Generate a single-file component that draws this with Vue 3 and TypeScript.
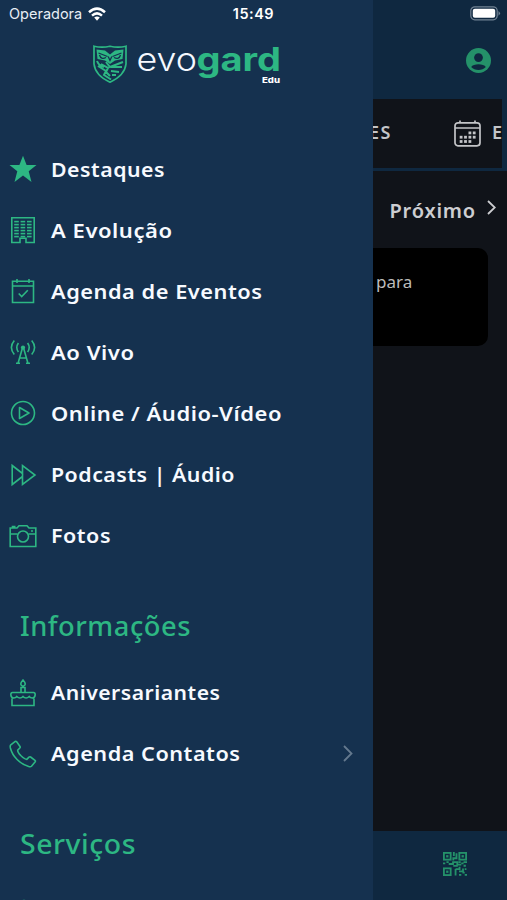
<script setup lang="ts">
type IconName = 'star' | 'building' | 'event' | 'antenna' | 'play' | 'forward' | 'camera' | 'cake' | 'phone' | 'circle'

interface MenuItem {
  label: string
  icon: IconName
  width: number
  expandable?: boolean
}

interface MenuSection {
  title?: string
  titleWidth?: number
  items: MenuItem[]
}

const sections: MenuSection[] = [
  {
    items: [
      { label: 'Destaques', icon: 'star', width: 114 },
      { label: 'A Evolução', icon: 'building', width: 121.5 },
      { label: 'Agenda de Eventos', icon: 'event', width: 211.5 },
      { label: 'Ao Vivo', icon: 'antenna', width: 83.5 },
      { label: 'Online / Áudio-Vídeo', icon: 'play', width: 231 },
      { label: 'Podcasts | Áudio', icon: 'forward', width: 184 },
      { label: 'Fotos', icon: 'camera', width: 60 },
    ],
  },
  {
    title: 'Informações',
    titleWidth: 171,
    items: [
      { label: 'Aniversariantes', icon: 'cake', width: 169.5 },
      { label: 'Agenda Contatos', icon: 'phone', width: 189.5, expandable: true },
    ],
  },
  {
    title: 'Serviços',
    titleWidth: 116,
    items: [{ label: '', icon: 'circle', width: 0 }],
  },
]

const windows = [0, 1, 2, 3, 4, 5].flatMap((row) => [0, 1, 2].map((col) => ({ x: 5.2 + col * 6.4, y: 4.8 + row * 3 })))

const calendarDots = [
  [15, 11.5], [19.3, 11.5],
  [6.2, 15.8], [10.6, 15.8], [15, 15.8], [19.3, 15.8],
  [6.2, 20.1], [10.6, 20.1], [15, 20.1],
]

const qrFinders = [[0, 0], [13.5, 0], [0, 13.5]]
</script>

<template>
  <div class="screen">
    <div class="page">
      <header class="page-header">
        <svg class="account" viewBox="0 0 24 24">
          <circle cx="12" cy="12" r="12" fill="currentColor" />
          <circle cx="12" cy="9.2" r="4.2" fill="#0f2840" />
          <path d="M5 18.3C6.7 14.8 17.3 14.8 19 18.3C15.8 22 8.2 22 5 18.3Z" fill="#0f2840" />
        </svg>
      </header>
      <nav class="tabs">
        <span class="tab tab-prev">ES</span>
        <svg class="calendar" viewBox="0 0 27 27" fill="none" stroke="currentColor" stroke-width="1.7">
          <rect x="1" y="2.8" width="25" height="23" rx="3" />
          <path d="M1 8H26M6 .5V3M21 .5V3" />
          <rect v-for="[x, y] in calendarDots" :key="`${x}-${y}`" :x="x - .5" :y="y" width="2.8" height="2.8" fill="currentColor" stroke="none" />
        </svg>
        <span class="tab tab-next">E</span>
      </nav>
      <main class="content">
        <div class="next">
          <span class="next-label">Próximo</span>
          <svg class="next-arrow" viewBox="0 0 9 15" fill="none" stroke="currentColor" stroke-width="1.8"><path d="M1 1L7.8 7.5L1 14" /></svg>
        </div>
        <article class="card">para</article>
      </main>
      <footer class="bottom">
        <svg class="qr" viewBox="0 0 21 21" fill="none" stroke="currentColor">
          <g v-for="[x, y] in qrFinders" :key="`${x}-${y}`">
            <rect :x="x + .8" :y="y + .8" width="5.9" height="5.9" stroke-width="1.6" />
            <rect :x="x + 2.75" :y="y + 2.75" width="2" height="2" fill="currentColor" stroke="none" />
          </g>
          <path d="M9.5 0V3.5M11.8 1.2V5.5H9V7.5M0 10H2M3 8.8H5M5 10.5H9.5M8 8.8H12.5V11H16M13.5 8.8H15.5M16 10H18M18 8.8H21M9 12.2H13M18 12H20M11 14.8V20.5M11 15H14.5V13M14 17H17.5V14.5M19 15H20.5M17 18H19M14 20H16M19 20H21M8.8 8V11" stroke-width="1.6" />
        </svg>
      </footer>
    </div>

    <aside class="drawer">
      <div class="brand">
        <svg class="shield" viewBox="0 0 34 38" fill="none" stroke="currentColor">
          <path d="M1 1.2Q9 3.2 17 1.2Q25 3.2 33 1.2V19C32 28 24 34 17 37.2C10 34 2 28 1 19Z" stroke-width="1.7" />
          <path d="M3.5 4.5L12 5.5L17 9.5L22 5.5L30.5 4.5L29.5 14L22 15.5L17 19L12 15.5L4.5 14Z" fill="currentColor" stroke="none" />
          <path d="M5.5 8L14.5 11.5M28.5 8L19.5 11.5M6.5 10Q8 15 13 12.5M27.5 10Q26 15 21 12.5M15.2 11.5L17 15.5L18.8 11.5" stroke="#15314f" stroke-width="1.3" />
          <path d="M4 16Q6 21 11 22M5 21L13 26L11 30L18 34.5M13 17L17 22L30 17M18 22L29 22M18 26L26 27M19 30L23 30M8 19L15 23L13 27L17 31" stroke-width="2" />
        </svg>
        <svg class="wordmark" viewBox="0 0 146 44">
          <text class="word-light" x="-.5" y="28" textLength="60.5" lengthAdjust="spacingAndGlyphs">evo</text>
          <text class="word-bold" x="59.5" y="28" textLength="84.5" lengthAdjust="spacingAndGlyphs">gard</text>
          <text class="word-edu" x="125" y="40" textLength="18" lengthAdjust="spacingAndGlyphs">Edu</text>
        </svg>
      </div>

      <section v-for="(section, index) in sections" :key="index">
        <h2 v-if="section.title" class="heading">
          <svg class="heading-text" viewBox="0 0 200 40"><text x="0" y="29" :textLength="section.titleWidth" lengthAdjust="spacingAndGlyphs">{{ section.title }}</text></svg>
        </h2>
        <div v-for="item in section.items" :key="item.icon" class="row">
          <svg class="icon" viewBox="0 0 28 28" fill="none" stroke="currentColor" stroke-width="1.6">
            <path v-if="item.icon === 'star'" d="M14 .7L17.6 10H27.5L19.7 16.2L22.5 27L14 20.6L5.5 27L8.3 16.2L.5 10H10.4Z" fill="currentColor" stroke="none" />
            <g v-else-if="item.icon === 'building'">
              <path d="M2.8 1.8H25.2V26.5H17V22.2H11V26.5H2.8Z" />
              <rect v-for="w in windows" :key="`${w.x}-${w.y}`" :x="w.x" :y="w.y" width="4.6" height="1.6" fill="currentColor" stroke="none" />
            </g>
            <g v-else-if="item.icon === 'event'">
              <path d="M3.5 4.3H24.5V25.5H3.5ZM3.5 9H24.5M8 2V6M20 2V6" />
              <path d="M9.7 16.5L12.7 19.6L18.8 13.2" />
            </g>
            <g v-else-if="item.icon === 'antenna'">
              <circle cx="14" cy="9.5" r="2.1" fill="currentColor" stroke="none" />
              <path d="M13.3 10.5L9.2 24.8M14.7 10.5L18.8 24.8M10.8 20H17.2M7 25.3H11M17 25.3H21M9.4 5Q6.2 9.5 9.4 14M18.6 5Q21.8 9.5 18.6 14M5.3 2.5Q-.5 9.5 5.3 16.5M22.7 2.5Q28.5 9.5 22.7 16.5" />
            </g>
            <g v-else-if="item.icon === 'play'">
              <circle cx="14" cy="14" r="11.5" /><path d="M10.5 8.5L20 14L10.5 19.5Z" stroke-linejoin="round" />
            </g>
            <path v-else-if="item.icon === 'forward'" d="M3.2 4.5L13.5 12.5V4.5L26 14L13.5 23.5V15.5L3.2 23.5ZM13.5 12.5V15.5" />
            <g v-else-if="item.icon === 'camera'">
              <path d="M1.2 6H8L10 3.8H18L20 6H26.8V24.5H1.2ZM1.2 12H8.5M19.5 12H26.8M3.5 6V4.5H6.5M22 9H24" />
              <circle cx="14" cy="14.5" r="5.5" />
            </g>
            <path v-else-if="item.icon === 'cake'" d="M3 19.5V26.5H25V19.5M3.5 13.5H24.5Q26.2 13.5 26.2 15.8Q26 19 23.3 19Q21.5 19 20.2 17.5Q17 20.5 14 17.5Q11 20.5 7.8 17.5Q6.5 19 4.7 19Q2 19 1.8 15.8Q1.8 13.5 3.5 13.5ZM12 13.5V8.5H16V13.5M14 1Q18.5 5.8 14 7.3Q9.5 5.8 14 1Z" />
            <path v-else-if="item.icon === 'phone'" d="M1.5 5.2L6.2 1.4Q7 1 7.7 1.8L11 6.5Q11.5 7.3 10.8 8L8.7 10.2Q8.5 12 12 15.8Q15.7 19.4 17.8 19.4L20 17.2Q20.8 16.5 21.6 17L26 20.3Q26.8 21 26.2 21.8L22.5 26.2Q21.7 27 19.7 26.5C11 24 3.5 16.5 1.4 8Q1 6 1.5 5.2Z" />
            <circle v-else cx="15" cy="7.5" r="4" />
          </svg>
          <svg v-if="item.label" class="label" viewBox="0 0 250 40"><text x="0" y="27.5" :textLength="item.width" lengthAdjust="spacingAndGlyphs">{{ item.label }}</text></svg>
          <svg v-if="item.expandable" class="chevron" viewBox="0 0 10 17" fill="none" stroke="currentColor" stroke-width="1.8"><path d="M1 1L8.5 8.5L1 16" /></svg>
        </div>
      </section>
    </aside>

    <div class="status">
      <div class="carrier">
        <span>Operadora</span>
        <svg class="wifi" viewBox="0 0 18 14" fill="none" stroke="currentColor" stroke-width="2.5">
          <path d="M1 5.2Q9-2 17 5.2M4 8.6Q9 4.2 14 8.6" /><path d="M6.2 10.6Q9 8.6 11.8 10.6L9 13.7Z" fill="currentColor" stroke="none" />
        </svg>
      </div>
      <span class="clock">15:49</span>
      <svg class="battery" viewBox="0 0 31 15">
        <rect x=".8" y=".8" width="26.4" height="13" rx="4" fill="none" stroke="#718293" stroke-width="1.2" />
        <rect x="2.8" y="2.8" width="22.4" height="9" rx="2" fill="#fff" />
        <path d="M28.5 5Q31.5 7.3 28.5 9.7Z" fill="#718293" />
      </svg>
    </div>
  </div>
</template>

<style>
body {
  background: #101319;
}
</style>

<style scoped>
.screen {
  position: relative;
  width: 507px;
  height: 900px;
  overflow: hidden;
  font-family: "Noto Sans", "Open Sans", sans-serif;
}
.page {
  display: flex;
  flex-direction: column;
  height: 100%;
  background: #101319;
}
.page-header {
  box-sizing: border-box;
  display: flex;
  justify-content: flex-end;
  height: 99px;
  padding: 48px 16px 0 0;
  background: #0f2840;
}
.account {
  width: 25px;
  height: 25px;
  color: #249169;
}
.tabs {
  box-sizing: border-box;
  display: flex;
  align-items: center;
  height: 72px;
  padding-left: 369px;
  border-right: 5px solid #0f2840;
  border-bottom: 3px solid #0f2840;
  overflow: hidden;
  color: #c4c5c8;
}
.tab {
  flex: none;
  margin-bottom: 3px;
  font-size: 18px;
  font-weight: 600;
  letter-spacing: 1.5px;
  line-height: 24px;
}
.tab-prev {
  width: 85px;
}
.calendar {
  flex: none;
  width: 27px;
  height: 27px;
  margin-right: 11px;
}
.content {
  flex: 1;
}
.next {
  display: flex;
  align-items: center;
  justify-content: flex-end;
  gap: 11px;
  height: 77px;
  padding-right: 11px;
  color: #cdced1;
}
.next-label {
  margin-top: 2px;
  font-size: 20px;
  font-weight: 600;
  letter-spacing: .8px;
}
.next-arrow {
  width: 9px;
  height: 15px;
  margin-bottom: 5px;
}
.card {
  box-sizing: border-box;
  width: 474px;
  height: 98px;
  margin-left: 14px;
  padding: 22px 0 0 362px;
  border-radius: 10px;
  background: #000;
  color: #bcbcbc;
  font-size: 17px;
  line-height: 24px;
}
.bottom {
  box-sizing: border-box;
  display: flex;
  justify-content: flex-end;
  height: 69px;
  padding: 21px 40px 0 0;
  background: #0f2840;
}
.qr {
  width: 24px;
  height: 24px;
  color: #249169;
}
.drawer {
  position: absolute;
  top: 0;
  left: 0;
  width: 373px;
  height: 900px;
  overflow: hidden;
  background: #15314f;
}
.brand {
  box-sizing: border-box;
  display: flex;
  gap: 10px;
  height: 138px;
  padding: 45px 0 0 93px;
}
.shield {
  width: 34px;
  height: 38px;
  color: #2db783;
}
.wordmark {
  width: 146px;
  height: 44px;
  margin-top: -2px;
  overflow: visible;
}
.word-light,
.word-bold {
  font-family: Inter, sans-serif;
  font-size: 32px;
}
.word-light {
  fill: #f5f9ff;
  font-weight: 300;
}
.word-bold {
  fill: #2db783;
  font-weight: 700;
}
.word-edu {
  fill: #fff;
  font-family: Inter, sans-serif;
  font-size: 8px;
  font-weight: 800;
}
.row {
  display: flex;
  align-items: center;
  height: 61.1px;
  padding-left: 9px;
}
.icon {
  flex: none;
  width: 28px;
  height: 28px;
  margin-top: 1px;
  color: #2db783;
}
.label {
  flex: none;
  width: 250px;
  height: 40px;
  margin-left: 14px;
  fill: #f7faff;
  font-size: 20.5px;
  font-weight: 600;
  letter-spacing: .5px;
  overflow: visible;
}
.heading {
  display: flex;
  align-items: center;
  height: 96px;
  margin: 0;
  padding: 27px 0 0 20px;
  box-sizing: border-box;
}
.heading-text {
  width: 200px;
  height: 40px;
  fill: #2db783;
  font-size: 26.5px;
  font-weight: 500;
  letter-spacing: .5px;
  overflow: visible;
}
.chevron {
  width: 10px;
  height: 17px;
  margin-left: 42px;
  color: #64798e;
}
.status {
  position: absolute;
  top: 0;
  left: 0;
  display: grid;
  grid-template-columns: 1fr auto 1fr;
  align-items: center;
  width: 507px;
  height: 27px;
  color: #fff;
  font-family: Inter, sans-serif;
}
.carrier {
  display: flex;
  align-items: center;
  gap: 6px;
  padding-left: 9px;
  color: #e8eef5;
  font-size: 14.5px;
}
.wifi {
  width: 18px;
  height: 14px;
  color: #fff;
}
.clock {
  font-size: 14.5px;
  font-weight: 600;
  letter-spacing: .5px;
}
.battery {
  justify-self: end;
  width: 31px;
  height: 15px;
  margin-right: 6px;
}
</style>
